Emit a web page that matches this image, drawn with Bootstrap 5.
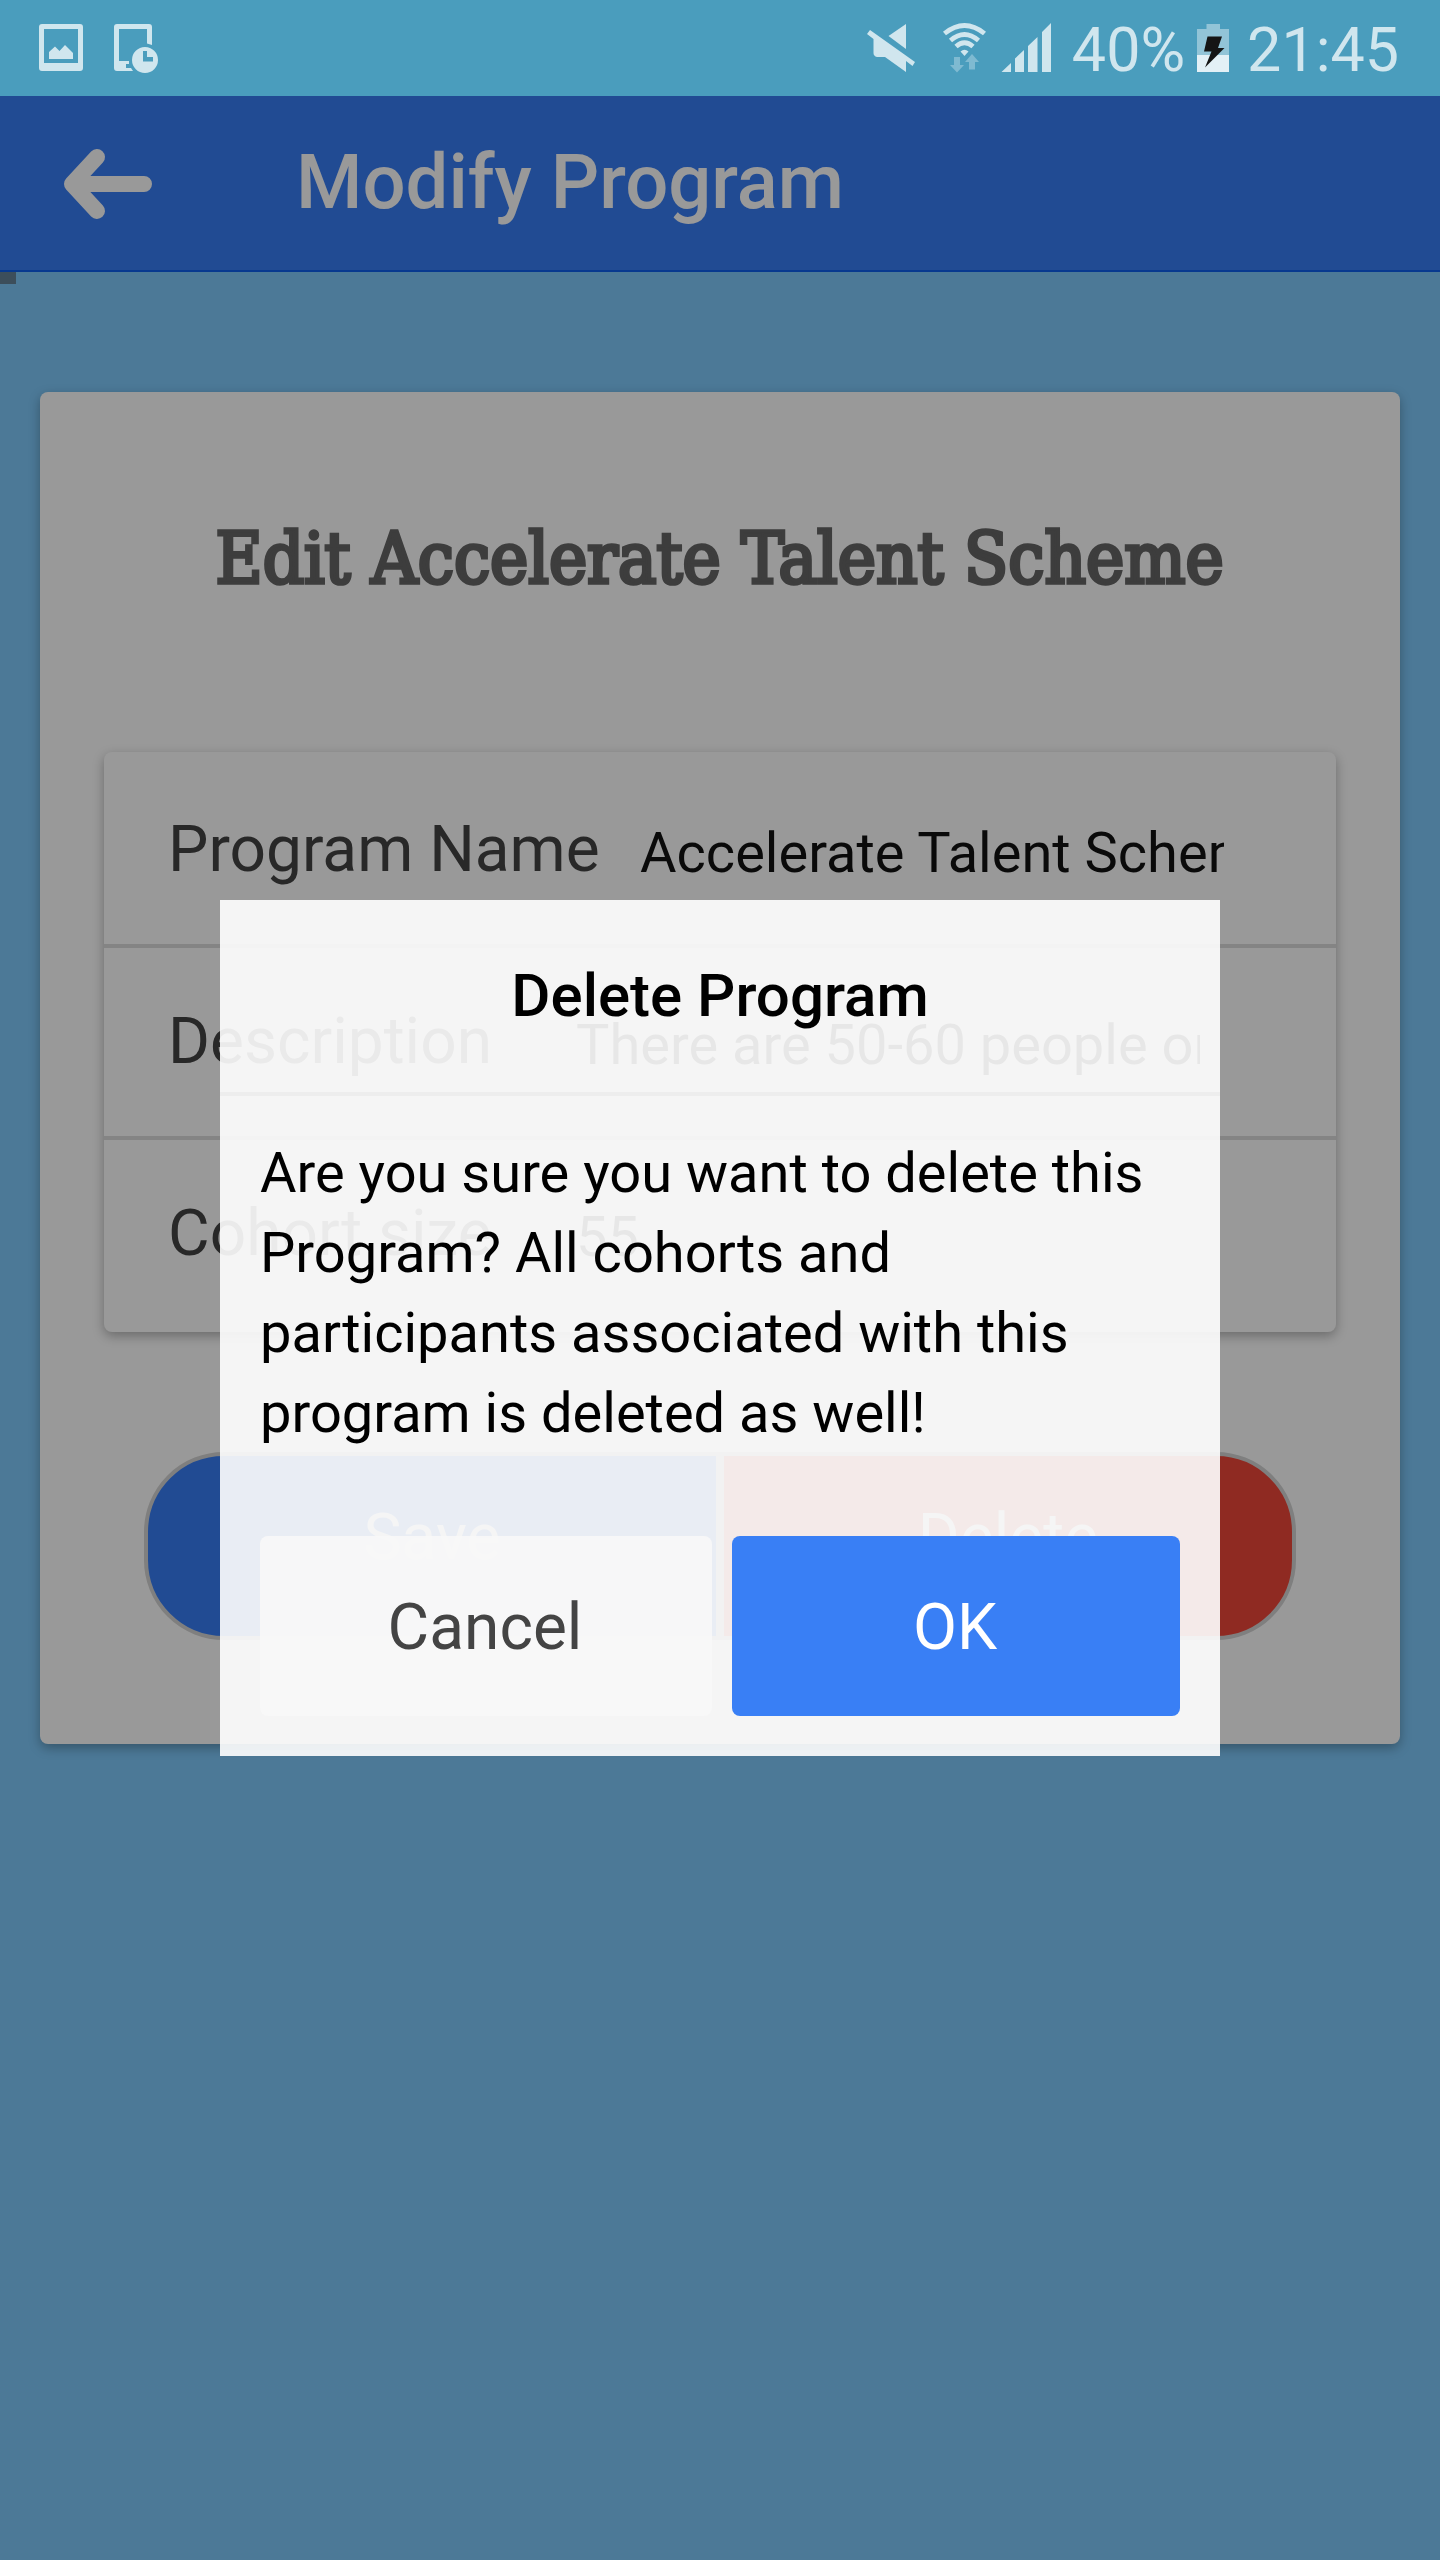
<!DOCTYPE html>
<html lang="en">
<head>
<meta charset="utf-8">
<meta name="viewport" content="width=device-width, initial-scale=1">
<title>Modify Program</title>
<link href="https://cdn.jsdelivr.net/npm/bootstrap@5.3.0/dist/css/bootstrap.min.css" rel="stylesheet">
<style>
  body { width: 1440px; height: 2560px; overflow: hidden; background: #7fcafc; font-family: Roboto, "Liberation Sans", sans-serif; color: #000; }
  .app { height: 2560px; }
  .status { height: 96px; background: #4a9dbd; color: #d0e6ee; z-index: 1060; font-size: 61px; line-height: 96px; padding-left: 30px; padding-right: 41px; }
  .status svg { display: block; flex: none; }
  .status-battery { margin-left: 6px; }
  .status-text { height: 96px; white-space: nowrap; padding-top: 2px; }
  .app-bar { height: 176px; background: #387ef5; border-bottom: 2px solid #0c60ee; padding: 0 0 0 60px; }
  .app-bar svg { margin-top: 2px; }
  .app-title { font-size: 76px; font-weight: 500; line-height: 88px; margin: -2px 0 0 140px; color: #fff; }
  .progress-stub { width: 16px; height: 12px; background: #648298; }
  .panel { margin: 108px 40px 0; height: 1352px; background: #fff; border: 0; border-radius: 8px; box-shadow: 0 4px 12px rgba(0,0,0,.3); padding: 0 64px; }
  .panel-title { height: 360px; padding-top: 119px; font-family: "DejaVu Serif Condensed", "DejaVu Serif", serif; font-size: 71px; line-height: 96px; font-weight: 400; color: #666; margin: 0; -webkit-text-stroke: 3.6px #666; white-space: nowrap; }
  .panel-title span { display: inline-block; transform: scaleX(1.011); }
  .fields { height: 580px; border-radius: 8px; box-shadow: 0 4px 12px rgba(0,0,0,.3); }
  .fields .field { height: 192px; padding: 0 0 0 64px; border: 0; border-bottom: 4px solid #ddd; background: transparent; }
  .fields .field:first-child { height: 196px; padding-top: 4px; }
  .fields .field:last-child { border-bottom: 0; padding-bottom: 4px; }
  .field-label { width: 408px; font-size: 64px; line-height: 80px; color: #444; white-space: nowrap; }
  .field-label.wide { width: 472px; }
  .field-value { width: 624px; margin-top: 6px; font-size: 56px; line-height: 80px; color: #111; white-space: nowrap; overflow: hidden; }
  .wide + .field-value { width: 584px; }
  .actions { margin: 120px 40px 0; height: 188px; }
  .actions .btn { border: 4px solid #d4d4d4; font-size: 64px; line-height: 1; color: #fff; padding: 0 0 16px; }
  .actions .btn-save { background: #387ef5; border-radius: 80px 0 0 80px; }
  .actions .btn-delete { background: #ef473a; border-radius: 0 80px 80px 0; }
  .shade { top: 96px; background: rgba(0,0,0,.4); z-index: 1050; }
  .dialog-box { width: 1000px; height: 856px; margin: 804px auto 0; background: rgba(255,255,255,.9); border: 0; border-radius: 0; }
  .dialog-head { height: 196px; border-bottom: 4px solid #ededed; }
  .dialog-title { font-size: 60px; font-weight: 500; line-height: 72px; padding-top: 60px; margin: 0; color: #000; }
  .dialog-text { height: 400px; padding: 37px 40px 0; font-size: 56px; line-height: 80px; flex: none; }
  .dialog-actions { padding: 40px; gap: 20px; }
  .dialog-actions .btn { height: 180px; border: 0; border-radius: 8px; font-size: 64px; line-height: 1; padding: 3px 2px 0 0; }
  .dialog-actions .btn-cancel { width: 452px; background: rgba(248,248,248,.95); color: #444; }
  .dialog-actions .btn-ok { width: 448px; background: rgba(55,125,245,.99); color: #fff; }
</style>
<script src="https://cdn.jsdelivr.net/npm/bootstrap@5.3.0/dist/js/bootstrap.bundle.min.js"></script>
</head>
<body>
<div class="app d-flex flex-column">
  <div class="status d-flex align-items-center position-relative">
    <svg width="140" height="96" viewBox="30 0 140 96" fill="#d0e6ee">
      <path fill-rule="evenodd" d="M42 24H80a3 3 0 0 1 3 3V68a3 3 0 0 1-3 3H42a3 3 0 0 1-3-3V27a3 3 0 0 1 3-3ZM44 29V63H78V29Z"/>
      <path d="M49 59V52L55 46.500L59.500 51L65 45L73 53V59Z"/>
      <path d="M117 24H149a3 3 0 0 1 3 3V45L147 43.500V29H119V61H129V64H126V68H131L133 71H117a3 3 0 0 1-3-3V27a3 3 0 0 1 3-3Z"/>
      <path fill-rule="evenodd" d="M145 47a13 13 0 1 0 0 26a13 13 0 1 0 0-26ZM143 51H147V57H153V61.500H143Z"/>
    </svg>
    <svg class="ms-auto" width="205" height="96" viewBox="860 0 205 96" fill="#d0e6ee">
      <path d="M889.500 36L907 24V49Z"/>
      <path d="M871 30L916 62L913.500 66L907 61V72L886 57H878Q874.500 56 874.500 53V39L868 34Z"/>
      <g fill="none" stroke="#d0e6ee" stroke-width="4.800">
        <path d="M945.500 33.500Q965.500 17.500 985.500 33.500"/>
        <path d="M951.500 40.500Q965.500 28.500 979.500 40.500"/>
        <path d="M957 46.500Q965.500 39 974 46.500"/>
      </g>
      <path d="M961.500 51.500Q965.500 48 969.500 51.500L965.500 56Z"/>
      <path fill="#7fbad1" d="M955 57H961V65H965L958 72.500L951 65H955ZM970 69.500H976V62H980L973 54L966 62H970Z"/>
      <path d="M1002.500 72L1012 63V72ZM1016 72V58.500L1025 50V72ZM1029 72V46L1038.500 37V72ZM1043 72V32L1052 23V72Z"/>
    </svg>
    <div class="status-text ms-1 ps-1">40%</div>
    <svg class="status-battery" width="56" height="96" viewBox="1190 0 56 96">
      <path fill="#92c4d7" d="M1205.500 24H1219V29H1228V55H1196V29H1205.500Z"/>
      <path fill="#e3f0f6" d="M1196 55H1228V72H1196Z"/>
      <path fill="#151515" d="M1206.500 36.500H1221L1217 48H1223.500L1204 67.500L1210.500 51.500H1203Z"/>
    </svg>
    <div class="status-text">21:45</div>
  </div>
  <nav class="app-bar navbar flex-nowrap justify-content-start">
    <svg width="96" height="80" viewBox="60 144 96 80" fill="none" stroke="#fff" stroke-width="16" stroke-linecap="round" stroke-linejoin="round"><path d="M144 184H76M97 157L72 184L97 211"/></svg>
    <div class="app-title">Modify Program</div>
  </nav>
  <div class="progress-stub"></div>
  <main class="panel card">
    <h1 class="panel-title text-center"><span>Edit Accelerate Talent Scheme</span></h1>
    <div class="fields list-group list-group-flush">
      <div class="field list-group-item d-flex align-items-center"><div class="field-label wide">Program Name</div><div class="field-value">Accelerate Talent Scheme</div></div>
      <div class="field list-group-item d-flex align-items-center"><div class="field-label">Description</div><div class="field-value">There are 50-60 people on</div></div>
      <div class="field list-group-item d-flex align-items-center"><div class="field-label">Cohort size</div><div class="field-value">55</div></div>
    </div>
    <div class="actions d-flex">
      <button class="btn btn-save w-50">Save</button>
      <button class="btn btn-delete w-50">Delete</button>
    </div>
  </main>
</div>
<div class="shade position-absolute start-0 bottom-0 w-100">
  <div class="dialog-box modal-content" role="dialog">
    <div class="dialog-head"><h2 class="dialog-title text-center">Delete Program</h2></div>
    <div class="dialog-text">Are you sure you want to delete this Program? All cohorts and participants associated with this program is deleted as well!</div>
    <div class="dialog-actions d-flex">
      <button class="btn btn-cancel">Cancel</button>
      <button class="btn btn-ok">OK</button>
    </div>
  </div>
</div>
</body>
</html>
